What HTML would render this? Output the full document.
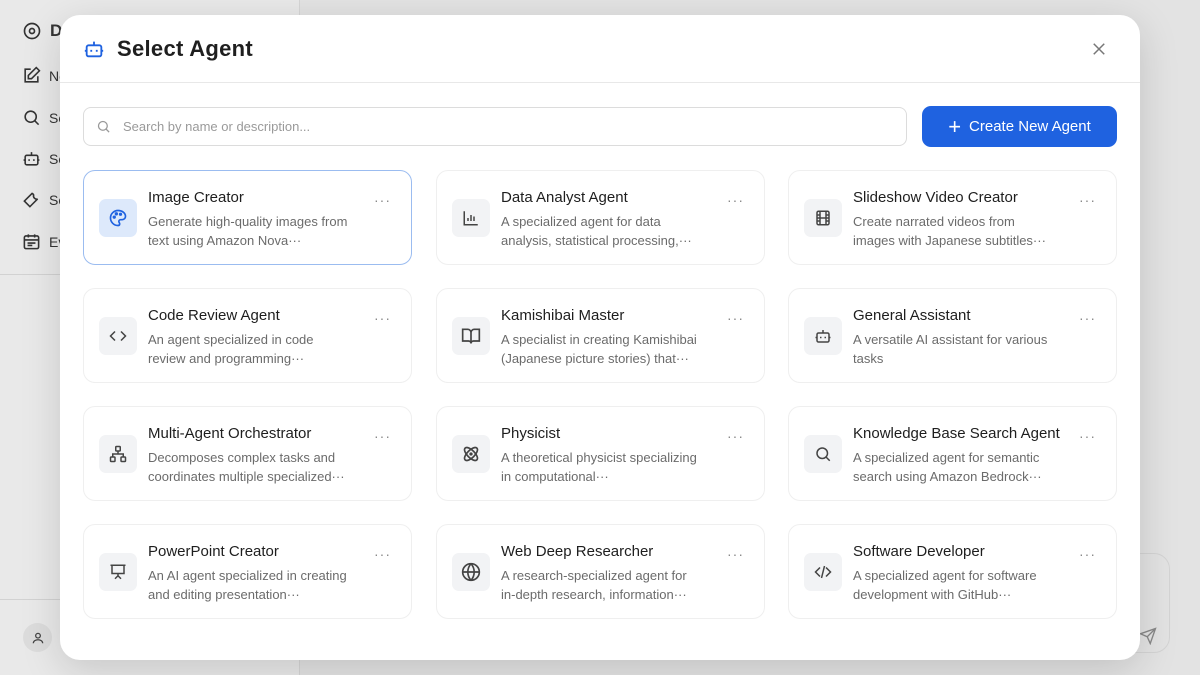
<!DOCTYPE html>
<html><head><meta charset="utf-8"><style>
*{box-sizing:border-box;margin:0;padding:0}
body{width:1200px;height:675px;overflow:hidden;background:#e3e3e3;font-family:"Liberation Sans","Noto Sans CJK JP",sans-serif;position:relative}
.side{position:absolute;left:0;top:0;width:300px;height:675px;background:#e9e9e9;border-right:1px solid #d6d6d6}
.side .it{position:absolute;left:22px;display:flex;align-items:center;gap:8px;font-size:14px;color:#333}
.side .hr{position:absolute;left:0;width:300px;border-top:1px solid #d2d2d2}
.inbox{position:absolute;left:1080px;top:553px;width:90px;height:100px;border:1px solid #d4d4d4;border-radius:16px}
.modal{position:absolute;left:60px;top:15px;width:1080px;height:645px;background:#fff;border-radius:20px;box-shadow:0 10px 40px rgba(0,0,0,.15)}
.hd{height:68px;border-bottom:1px solid #e8e8e8;display:flex;align-items:center;padding-left:23px}
.hd h1{font-size:22px;font-weight:700;color:#1f1f1f;margin-left:12px;letter-spacing:.3px}
.close{position:absolute;left:1030px;top:25px}
.search{position:absolute;left:23px;top:92px;width:824px;height:39px;border:1px solid #dcdcdc;border-radius:8px;display:flex;align-items:center;padding-left:12px;font-size:13px;color:#9a9a9a;gap:12px}
.btn{position:absolute;left:862px;top:91px;width:195px;height:41px;background:#1f62e0;border-radius:9px;color:#fff;font-size:15px;display:flex;align-items:center;justify-content:center;gap:8px}
.card{position:absolute;width:329px;height:95px;border:1px solid #efefef;border-radius:12px}
.card.sel{border:1.5px solid #9bbcf0}
.ic{position:absolute;left:15px;top:28px;width:38px;height:38px;border-radius:7px;background:#f2f3f5;display:flex;align-items:center;justify-content:center}
.sel .ic{background:#dde9fb}
.t{position:absolute;left:64px;top:18px;font-size:15px;color:#1e1e1e}
.d{position:absolute;left:64px;top:41px;width:200px;font-size:13px;line-height:19px;color:#6b6b6b}
.dots{position:absolute;left:290px;top:21px;font-size:14px;color:#888;letter-spacing:1px}
svg{display:block}
</style></head><body>
<div class="side">
<div class="it" style="top:21px"><svg width="20" height="20" viewBox="0 0 24 24" fill="none" stroke="#333" stroke-width="2"><circle cx="12" cy="12" r="9"/><circle cx="12" cy="12" r="3"/></svg><b style="font-size:17px">D</b></div>
<div class="it" style="top:66px"><svg width="19" height="19" viewBox="0 0 24 24" fill="none" stroke="#333" stroke-width="2"><path d="M11 4H4v16h16v-7"/><path d="M18 2l4 4-10 10H8v-4z"/></svg>Ne</div>
<div class="it" style="top:108px"><svg width="19" height="19" viewBox="0 0 24 24" fill="none" stroke="#333" stroke-width="2"><circle cx="11" cy="11" r="7"/><path d="M21 21l-5-5"/></svg>Se</div>
<div class="it" style="top:149px"><svg width="19" height="19" viewBox="0 0 24 24" fill="none" stroke="#333" stroke-width="2"><rect x="4" y="8" width="16" height="12" rx="2"/><path d="M12 8V4M2 14h2M20 14h2M9 13v2M15 13v2"/></svg>Se</div>
<div class="it" style="top:190px"><svg width="19" height="19" viewBox="0 0 24 24" fill="none" stroke="#333" stroke-width="2"><path d="M14.7 6.3a4 4 0 005 5L13 18l-3 3-7-7 3-3 6.7-6.7a4 4 0 012 2z"/></svg>Se</div>
<div class="it" style="top:232px"><svg width="19" height="19" viewBox="0 0 24 24" fill="none" stroke="#333" stroke-width="2"><rect x="3" y="5" width="18" height="16" rx="2"/><path d="M3 10h18M8 3v4M16 3v4M7 14h10M7 17h6"/></svg>Ev</div>
<div class="hr" style="top:274px"></div>
<div class="hr" style="top:599px"></div>
<div style="position:absolute;left:23px;top:623px;width:29px;height:29px;border-radius:50%;background:#dcdcdc;display:flex;align-items:center;justify-content:center"><svg width="14" height="14" viewBox="0 0 24 24" fill="none" stroke="#444" stroke-width="2.2"><circle cx="12" cy="8" r="4"/><path d="M4 21c0-4 4-6 8-6s8 2 8 6"/></svg></div>
</div>
<div class="inbox"><svg style="position:absolute;left:58px;top:73px" width="18" height="18" viewBox="0 0 24 24" fill="none" stroke="#888" stroke-width="1.8"><path d="M22 2L11 13M22 2l-7 20-4-9-9-4z"/></svg></div>

<div class="modal">
<div class="hd"><svg width="22" height="22" viewBox="0 0 24 24" fill="none" stroke="#1f62e0" stroke-width="2"><rect x="4" y="8" width="16" height="12" rx="2"/><path d="M12 8V4M2 14h2M20 14h2M9 13v2M15 13v2"/></svg><h1>Select Agent</h1></div>
<svg class="close" width="18" height="18" viewBox="0 0 24 24" fill="none" stroke="#777" stroke-width="2"><path d="M5 5l14 14M19 5L5 19"/></svg>
<div class="search"><svg width="15" height="15" viewBox="0 0 24 24" fill="none" stroke="#999" stroke-width="2"><circle cx="11" cy="11" r="7"/><path d="M21 21l-5-5"/></svg>Search by name or description...</div>
<div class="btn"><span style="font-size:22px;font-weight:300;line-height:1">+</span>Create New Agent</div>

<div class="card sel" style="left:23px;top:155px"><div class="ic"><svg width="20" height="20" viewBox="0 0 24 24" fill="none" stroke="#1f62e0" stroke-width="2"><path d="M12 3a9 9 0 000 18c1.5 0 2-1 2-2 0-1.5-1-1.5-1-3 0-1 1-2 2-2h2a4 4 0 004-4c0-4-4-7-9-7z"/><circle cx="7.5" cy="11" r="1"/><circle cx="10" cy="7" r="1"/><circle cx="15" cy="7.5" r="1"/></svg></div><div class="t">Image Creator</div><div class="d">Generate high-quality images from text using Amazon Nova···</div><div class="dots">···</div></div>
<div class="card" style="left:376px;top:155px"><div class="ic"><svg width="18" height="18" viewBox="0 0 24 24" fill="none" stroke="#444" stroke-width="2"><path d="M3 3v18h18M8 16v-4M12 16V8M16 16v-6"/></svg></div><div class="t">Data Analyst Agent</div><div class="d">A specialized agent for data analysis, statistical processing,···</div><div class="dots">···</div></div>
<div class="card" style="left:728px;top:155px"><div class="ic"><svg width="18" height="18" viewBox="0 0 24 24" fill="none" stroke="#444" stroke-width="2"><rect x="4" y="3" width="16" height="18" rx="2"/><path d="M8 3v18M16 3v18M4 12h16M4 8h4M4 16h4M16 8h4M16 16h4"/></svg></div><div class="t">Slideshow Video Creator</div><div class="d">Create narrated videos from images with Japanese subtitles···</div><div class="dots">···</div></div>

<div class="card" style="left:23px;top:273px"><div class="ic"><svg width="18" height="18" viewBox="0 0 24 24" fill="none" stroke="#444" stroke-width="2"><path d="M8 6l-6 6 6 6M16 6l6 6-6 6"/></svg></div><div class="t">Code Review Agent</div><div class="d">An agent specialized in code review and programming···</div><div class="dots">···</div></div>
<div class="card" style="left:376px;top:273px"><div class="ic"><svg width="20" height="20" viewBox="0 0 24 24" fill="none" stroke="#444" stroke-width="2"><path d="M2 4h6a4 4 0 014 4v13a3 3 0 00-3-3H2zM22 4h-6a4 4 0 00-4 4v13a3 3 0 013-3h7z"/></svg></div><div class="t">Kamishibai Master</div><div class="d">A specialist in creating Kamishibai (Japanese picture stories) that···</div><div class="dots">···</div></div>
<div class="card" style="left:728px;top:273px"><div class="ic"><svg width="18" height="18" viewBox="0 0 24 24" fill="none" stroke="#444" stroke-width="2"><rect x="4" y="8" width="16" height="12" rx="2"/><path d="M12 8V4M2 14h2M20 14h2M9 13v2M15 13v2"/></svg></div><div class="t">General Assistant</div><div class="d">A versatile AI assistant for various tasks</div><div class="dots">···</div></div>

<div class="card" style="left:23px;top:391px"><div class="ic"><svg width="18" height="18" viewBox="0 0 24 24" fill="none" stroke="#444" stroke-width="2"><rect x="9" y="2" width="6" height="6" rx="1"/><rect x="2" y="16" width="6" height="6" rx="1"/><rect x="16" y="16" width="6" height="6" rx="1"/><path d="M5 16v-4h14v4M12 8v4"/></svg></div><div class="t">Multi-Agent Orchestrator</div><div class="d">Decomposes complex tasks and coordinates multiple specialized···</div><div class="dots">···</div></div>
<div class="card" style="left:376px;top:391px"><div class="ic"><svg width="20" height="20" viewBox="0 0 24 24" fill="none" stroke="#444" stroke-width="2"><circle cx="12" cy="12" r="1"/><ellipse cx="12" cy="12" rx="10" ry="4.5" transform="rotate(45 12 12)"/><ellipse cx="12" cy="12" rx="10" ry="4.5" transform="rotate(-45 12 12)"/></svg></div><div class="t">Physicist</div><div class="d">A theoretical physicist specializing in computational···</div><div class="dots">···</div></div>
<div class="card" style="left:728px;top:391px"><div class="ic"><svg width="18" height="18" viewBox="0 0 24 24" fill="none" stroke="#444" stroke-width="2"><circle cx="11" cy="11" r="7"/><path d="M21 21l-5-5"/></svg></div><div class="t">Knowledge Base Search Agent</div><div class="d">A specialized agent for semantic search using Amazon Bedrock···</div><div class="dots">···</div></div>

<div class="card" style="left:23px;top:509px"><div class="ic"><svg width="18" height="18" viewBox="0 0 24 24" fill="none" stroke="#444" stroke-width="2"><path d="M2 3h20M4 3v11h16V3M12 14v3M8 21l4-4 4 4"/></svg></div><div class="t">PowerPoint Creator</div><div class="d">An AI agent specialized in creating and editing presentation···</div><div class="dots">···</div></div>
<div class="card" style="left:376px;top:509px"><div class="ic"><svg width="20" height="20" viewBox="0 0 24 24" fill="none" stroke="#444" stroke-width="2"><circle cx="12" cy="12" r="10"/><path d="M2 12h20M12 2a15 15 0 010 20M12 2a15 15 0 000 20"/></svg></div><div class="t">Web Deep Researcher</div><div class="d">A research-specialized agent for in-depth research, information···</div><div class="dots">···</div></div>
<div class="card" style="left:728px;top:509px"><div class="ic"><svg width="18" height="18" viewBox="0 0 24 24" fill="none" stroke="#444" stroke-width="2"><path d="M8 6l-6 6 6 6M16 6l6 6-6 6M14 4l-4 16"/></svg></div><div class="t">Software Developer</div><div class="d">A specialized agent for software development with GitHub···</div><div class="dots">···</div></div>
</div>
</body></html>
